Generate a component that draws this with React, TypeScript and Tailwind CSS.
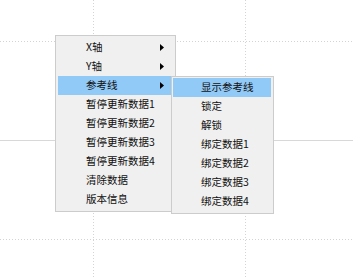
import { ReactNode } from 'react';

const mainItems = [
  { label: 'X轴', sub: true },
  { label: 'Y轴', sub: true },
  { label: '参考线', sub: true, active: true },
  { label: '暂停更新数据1' },
  { label: '暂停更新数据2' },
  { label: '暂停更新数据3' },
  { label: '暂停更新数据4' },
  { label: '清除数据' },
  { label: '版本信息' },
];

const subItems = [
  { label: '显示参考线', active: true },
  { label: '锁定' },
  { label: '解锁' },
  { label: '绑定数据1' },
  { label: '绑定数据2' },
  { label: '绑定数据3' },
  { label: '绑定数据4' },
];

function Row({ children, active, sub }: { children: ReactNode; active?: boolean; sub?: boolean }) {
  return (
    <div
      className={`flex h-[19px] items-center pl-[28px] pr-[9px] ${active ? 'bg-[#91c9f7]' : ''}`}
    >
      <span className="flex-1 leading-none">{children}</span>
      {sub && (
        <svg width="4" height="7" viewBox="0 0 4 7">
          <path d="M0 0 L4 3.5 L0 7 Z" fill="#000" />
        </svg>
      )}
    </div>
  );
}

export default function App() {
  return (
    <div
      className="relative h-[277px] w-[353px] overflow-hidden bg-white text-[10.5px] text-[#111]"
      style={{ fontFamily: '"Noto Sans CJK SC", "Noto Sans", sans-serif' }}
    >
      {/* chart grid behind the menu */}
      <svg width="353" height="277" className="absolute left-0 top-0">
        <g stroke="#d4d4d4" strokeWidth="1" strokeDasharray="1 2">
          <line x1="0" y1="41.5" x2="353" y2="41.5" />
          <line x1="0" y1="239.5" x2="353" y2="239.5" />
          <line x1="93.5" y1="0" x2="93.5" y2="277" />
          <line x1="245.5" y1="0" x2="245.5" y2="277" />
        </g>
        <line x1="0" y1="140.5" x2="353" y2="140.5" stroke="#d8d8d8" strokeWidth="1" />
      </svg>

      <div className="absolute left-[55px] top-[35px] w-[121px] border border-[#cccccc] bg-[#f0f0f0] p-[2px]">
        {mainItems.map((it) => (
          <Row key={it.label} active={it.active} sub={it.sub}>
            {it.label}
          </Row>
        ))}
      </div>

      <div className="absolute left-[171px] top-[76px] w-[103px] border border-[#cccccc] bg-[#f0f0f0] pb-[2px] pl-[1px] pr-[2px] pt-[1px]">
        {subItems.map((it) => (
          <Row key={it.label} active={it.active}>
            {it.label}
          </Row>
        ))}
      </div>
    </div>
  );
}
